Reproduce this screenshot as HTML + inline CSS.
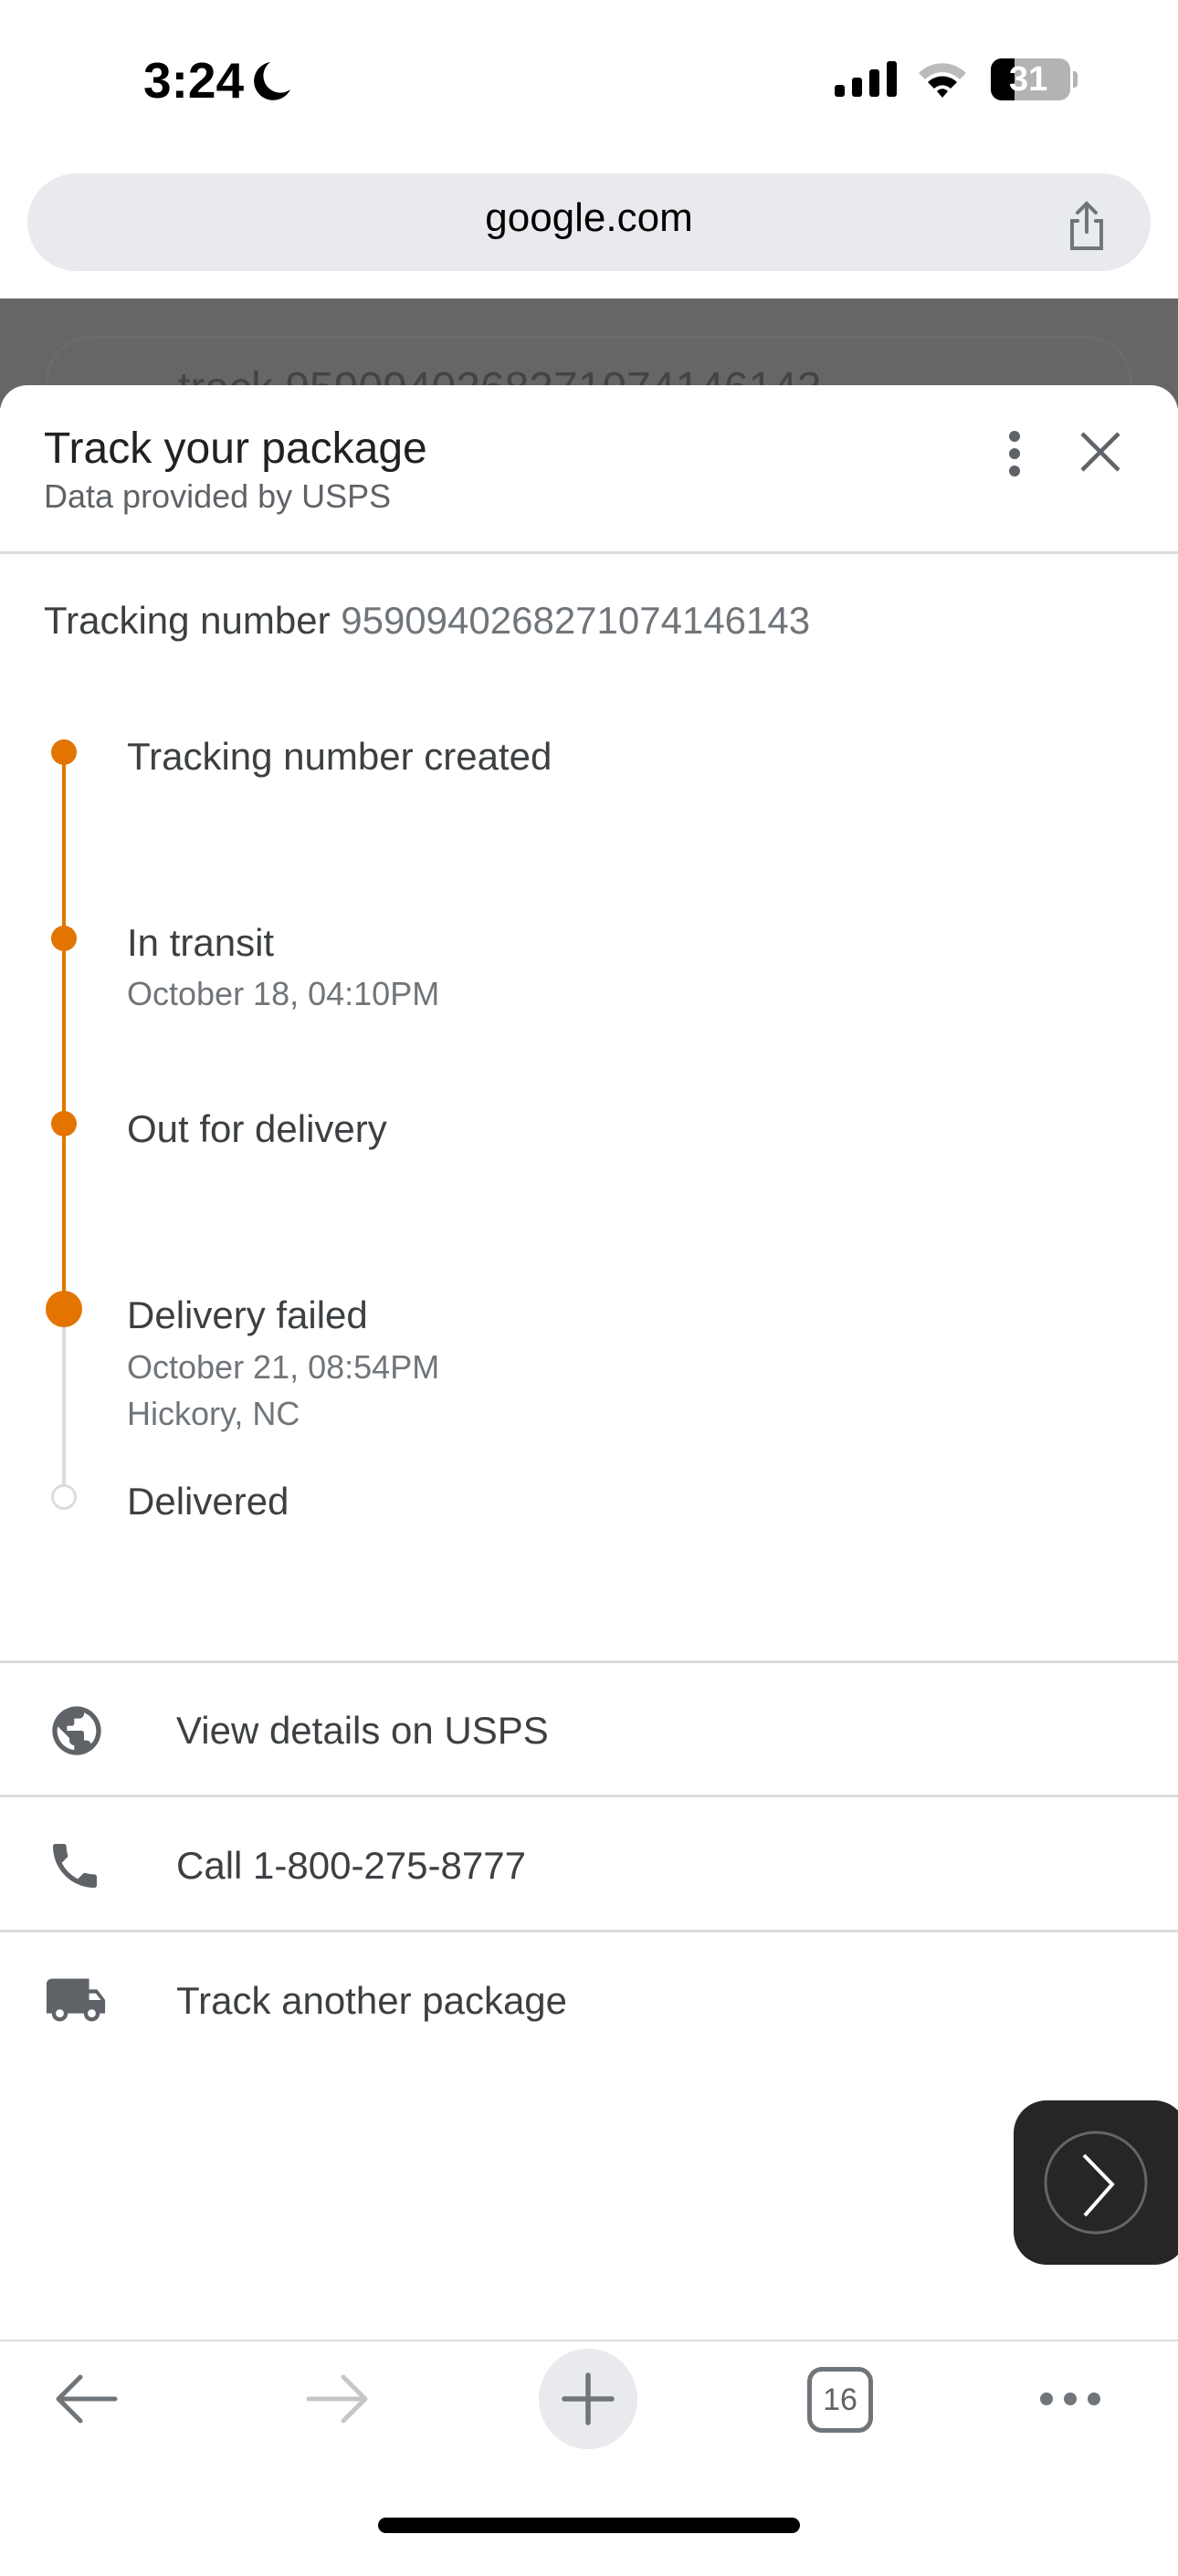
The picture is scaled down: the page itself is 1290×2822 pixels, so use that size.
<!DOCTYPE html>
<html><head><meta charset="utf-8"><style>
*{margin:0;padding:0;box-sizing:border-box}
body{width:1290px;height:2796px;position:relative;background:#fff;font-family:"Liberation Sans",Arial,sans-serif;overflow:hidden;color:#3c4043}
.a{position:absolute;white-space:nowrap}
.hr{position:absolute;left:0;width:1290px;height:3px;background:#dadce0}
.lbl{font-size:42px;color:#3c4043}
.sub{font-size:36px;color:#70757a}
.row{font-size:42px;color:#3c4043}
</style></head><body>
<div class="a" style="left:157px;top:56px;font-size:55px;font-weight:bold;color:#000">3:24</div>
<svg class="a" style="left:272px;top:64px" width="50" height="50" viewBox="0 0 50 50"><path d="M24 4 A21 21 0 1 0 46 34 A18 18 0 0 1 24 4Z" fill="#000"/></svg>
<svg class="a" style="left:912px;top:67px" width="72" height="40"><rect x="2" y="26" width="11" height="13" rx="3"/><rect x="21" y="18" width="11" height="21" rx="3"/><rect x="40" y="9" width="11" height="30" rx="3"/><rect x="59" y="0" width="11" height="39" rx="3"/></svg>
<svg class="a" style="left:1003px;top:66px" width="58" height="42" viewBox="0 0 58 42"><path d="M3 14 A37 37 0 0 1 55 14 L48 21 A27 27 0 0 0 10 21Z" fill="#bbb"/><path d="M13 24 A23 23 0 0 1 45 24 L38 31 A13 13 0 0 0 20 31Z" fill="#000"/><path d="M23 34 A8 8 0 0 1 35 34 L29 41Z" fill="#000"/></svg>
<div class="a" style="left:1085px;top:64px;width:87px;height:46px;border-radius:12px;background:#b3b3b3;overflow:hidden"><div style="position:absolute;left:0;top:0;width:26px;height:46px;background:#000"></div><div style="position:absolute;left:20px;top:2px;font-size:38px;font-weight:bold;color:#fff">31</div></div>
<div class="a" style="left:1175px;top:78px;width:5px;height:18px;border-radius:0 4px 4px 0;background:#b3b3b3"></div>

<div class="a" style="left:30px;top:190px;width:1230px;height:107px;border-radius:54px;background:#e8eaed"></div>
<div class="a" style="left:0;top:214px;width:1290px;text-align:center;font-size:44px;color:#000">google.com</div>
<svg class="a" style="left:1160px;top:218px" width="60" height="60" viewBox="0 0 60 60" fill="none" stroke="#70757a" stroke-width="4" stroke-linecap="round"><path d="M30 6 V36 M20 15 L30 5 L40 15"/><path d="M20 24 H14 V54 H46 V24 H40"/></svg>

<div class="a" style="left:0;top:327px;width:1290px;height:120px;background:#666"></div>
<div class="a" style="left:50px;top:368px;width:1190px;height:100px;border-radius:50px;border:3px solid #6b6b6b"></div>
<div class="a" style="left:195px;top:398px;font-size:48px;color:#444">track 9590940268271074146143</div>

<div class="a" style="left:0;top:422px;width:1290px;height:2400px;background:#fff;border-radius:30px 30px 0 0"></div>
<div class="a" style="left:48px;top:464px;font-size:48px;color:#202124">Track your package</div>
<div class="a" style="left:48px;top:523px;font-size:36px;color:#5f6368">Data provided by USPS</div>
<svg class="a" style="left:1096px;top:470px" width="30" height="60"><circle cx="15" cy="8" r="6" fill="#5f6368"/><circle cx="15" cy="27" r="6" fill="#5f6368"/><circle cx="15" cy="46" r="6" fill="#5f6368"/></svg>
<svg class="a" style="left:1182px;top:472px" width="46" height="46" stroke="#5f6368" stroke-width="4.5"><path d="M3 3 L43 43 M43 3 L3 43"/></svg>
<div class="hr" style="top:604px"></div>

<div class="a" style="left:48px;top:656px;font-size:42px;color:#3c4043">Tracking number <span style="color:#70757a">9590940268271074146143</span></div>

<div class="a" style="left:68px;top:824px;width:4px;height:610px;background:#e37400"></div>
<div class="a" style="left:68px;top:1434px;width:4px;height:206px;background:#dadce0"></div>
<div class="a" style="left:56px;top:810px;width:28px;height:28px;border-radius:50%;background:#e37400"></div>
<div class="a" style="left:56px;top:1014px;width:28px;height:28px;border-radius:50%;background:#e37400"></div>
<div class="a" style="left:56px;top:1217px;width:28px;height:28px;border-radius:50%;background:#e37400"></div>
<div class="a" style="left:50px;top:1414px;width:40px;height:40px;border-radius:50%;background:#e37400"></div>
<div class="a" style="left:56px;top:1626px;width:28px;height:28px;border-radius:50%;background:#fff;border:3px solid #dadce0"></div>

<div class="a lbl" style="left:139px;top:805px">Tracking number created</div>
<div class="a lbl" style="left:139px;top:1009px">In transit</div>
<div class="a sub" style="left:139px;top:1068px">October 18, 04:10PM</div>
<div class="a lbl" style="left:139px;top:1213px">Out for delivery</div>
<div class="a lbl" style="left:139px;top:1417px">Delivery failed</div>
<div class="a sub" style="left:139px;top:1477px">October 21, 08:54PM</div>
<div class="a sub" style="left:139px;top:1528px">Hickory, NC</div>
<div class="a lbl" style="left:139px;top:1621px">Delivered</div>

<div class="hr" style="top:1819px"></div>
<svg class="a" style="left:52px;top:1864px" width="64" height="64" viewBox="0 0 24 24"><path fill="#5f6368" d="M12 2C6.48 2 2 6.48 2 12s4.48 10 10 10 10-4.48 10-10S17.52 2 12 2zm-1 17.930c-3.95-.49-7-3.850-7-7.930 0-.62.08-1.210.21-1.790L9 15v1c0 1.1.9 2 2 2v1.930zm6.9-2.540c-.26-.81-1-1.390-1.900-1.390h-1v-3c0-.55-.45-1-1-1H8v-2h2c.55 0 1-.45 1-1V7h2c1.100 0 2-.9 2-2v-.41c2.930 1.190 5 4.060 5 7.410 0 2.080-.8 3.970-2.100 5.390z"/></svg>
<div class="a row" style="left:193px;top:1872px">View details on USPS</div>
<div class="hr" style="top:1966px"></div>
<svg class="a" style="left:50px;top:2012px" width="64" height="64" viewBox="0 0 24 24"><path fill="#5f6368" d="M6.62 10.79c1.44 2.83 3.76 5.14 6.59 6.59l2.2-2.2c.27-.27.67-.36 1.020-.24 1.120.37 2.330.57 3.570.57.55 0 1 .45 1 1V20c0 .55-.45 1-1 1-9.390 0-17-7.610-17-17 0-.55.45-1 1-1h3.5c.55 0 1 .45 1 1 0 1.250.2 2.450.57 3.570.11.35.03.74-.25 1.020l-2.200 2.200z"/></svg>
<div class="a row" style="left:193px;top:2020px">Call 1-800-275-8777</div>
<div class="hr" style="top:2114px"></div>
<svg class="a" style="left:48px;top:2156px" width="70" height="70" viewBox="0 0 24 24"><path fill="#5f6368" d="M20 8h-3V4H3c-1.1 0-2 .9-2 2v11h2c0 1.66 1.34 3 3 3s3-1.34 3-3h6c0 1.66 1.34 3 3 3s3-1.34 3-3h2v-5l-3-4zM6 18.5c-.83 0-1.5-.67-1.5-1.5s.67-1.5 1.5-1.5 1.5.67 1.5 1.5-.67 1.5-1.5 1.5zm13.5-9l1.96 2.5H17V9.5h2.5zm-1.5 9c-.83 0-1.5-.67-1.5-1.5s.67-1.5 1.5-1.5 1.5.67 1.5 1.5-.67 1.5-1.5 1.5z"/></svg>
<div class="a row" style="left:193px;top:2168px">Track another package</div>

<div class="a" style="left:1110px;top:2301px;width:190px;height:180px;border-radius:36px;background:#262626"></div>
<svg class="a" style="left:1140px;top:2331px" width="120" height="120" viewBox="0 0 120 120" fill="none"><circle cx="60" cy="60" r="55" stroke="#666" stroke-width="3"/><path d="M47 30 L78 62 L48 96" stroke="#fff" stroke-width="4"/></svg>

<div class="a" style="left:0;top:2563px;width:1290px;height:2px;background:#dadce0"></div>
<svg class="a" style="left:58px;top:2598px" width="74" height="60" fill="none" stroke="#70757a" stroke-width="5" stroke-linecap="round" stroke-linejoin="round"><path d="M6 30 H68 M30 6 L6 30 L30 54"/></svg>
<svg class="a" style="left:332px;top:2598px" width="74" height="60" fill="none" stroke="#c4c7c5" stroke-width="5" stroke-linecap="round" stroke-linejoin="round"><path d="M6 30 H68 M44 6 L68 30 L44 54"/></svg>
<div class="a" style="left:590px;top:2573px;width:108px;height:110px;border-radius:50%;background:#e8eaed"></div>
<svg class="a" style="left:614px;top:2598px" width="60" height="60" stroke="#70757a" stroke-width="5.5" stroke-linecap="round"><path d="M30 4 V56 M4 30 H56"/></svg>
<div class="a" style="left:884px;top:2593px;width:72px;height:72px;border-radius:16px;border:5px solid #70757a;font-size:34px;color:#5f6368;text-align:center;line-height:62px">16</div>
<svg class="a" style="left:1136px;top:2613px" width="72" height="30"><circle cx="10" cy="15" r="7" fill="#70757a"/><circle cx="36" cy="15" r="7" fill="#70757a"/><circle cx="62" cy="15" r="7" fill="#70757a"/></svg>
<div class="a" style="left:414px;top:2758px;width:462px;height:17px;border-radius:9px;background:#000"></div>
</body></html>
